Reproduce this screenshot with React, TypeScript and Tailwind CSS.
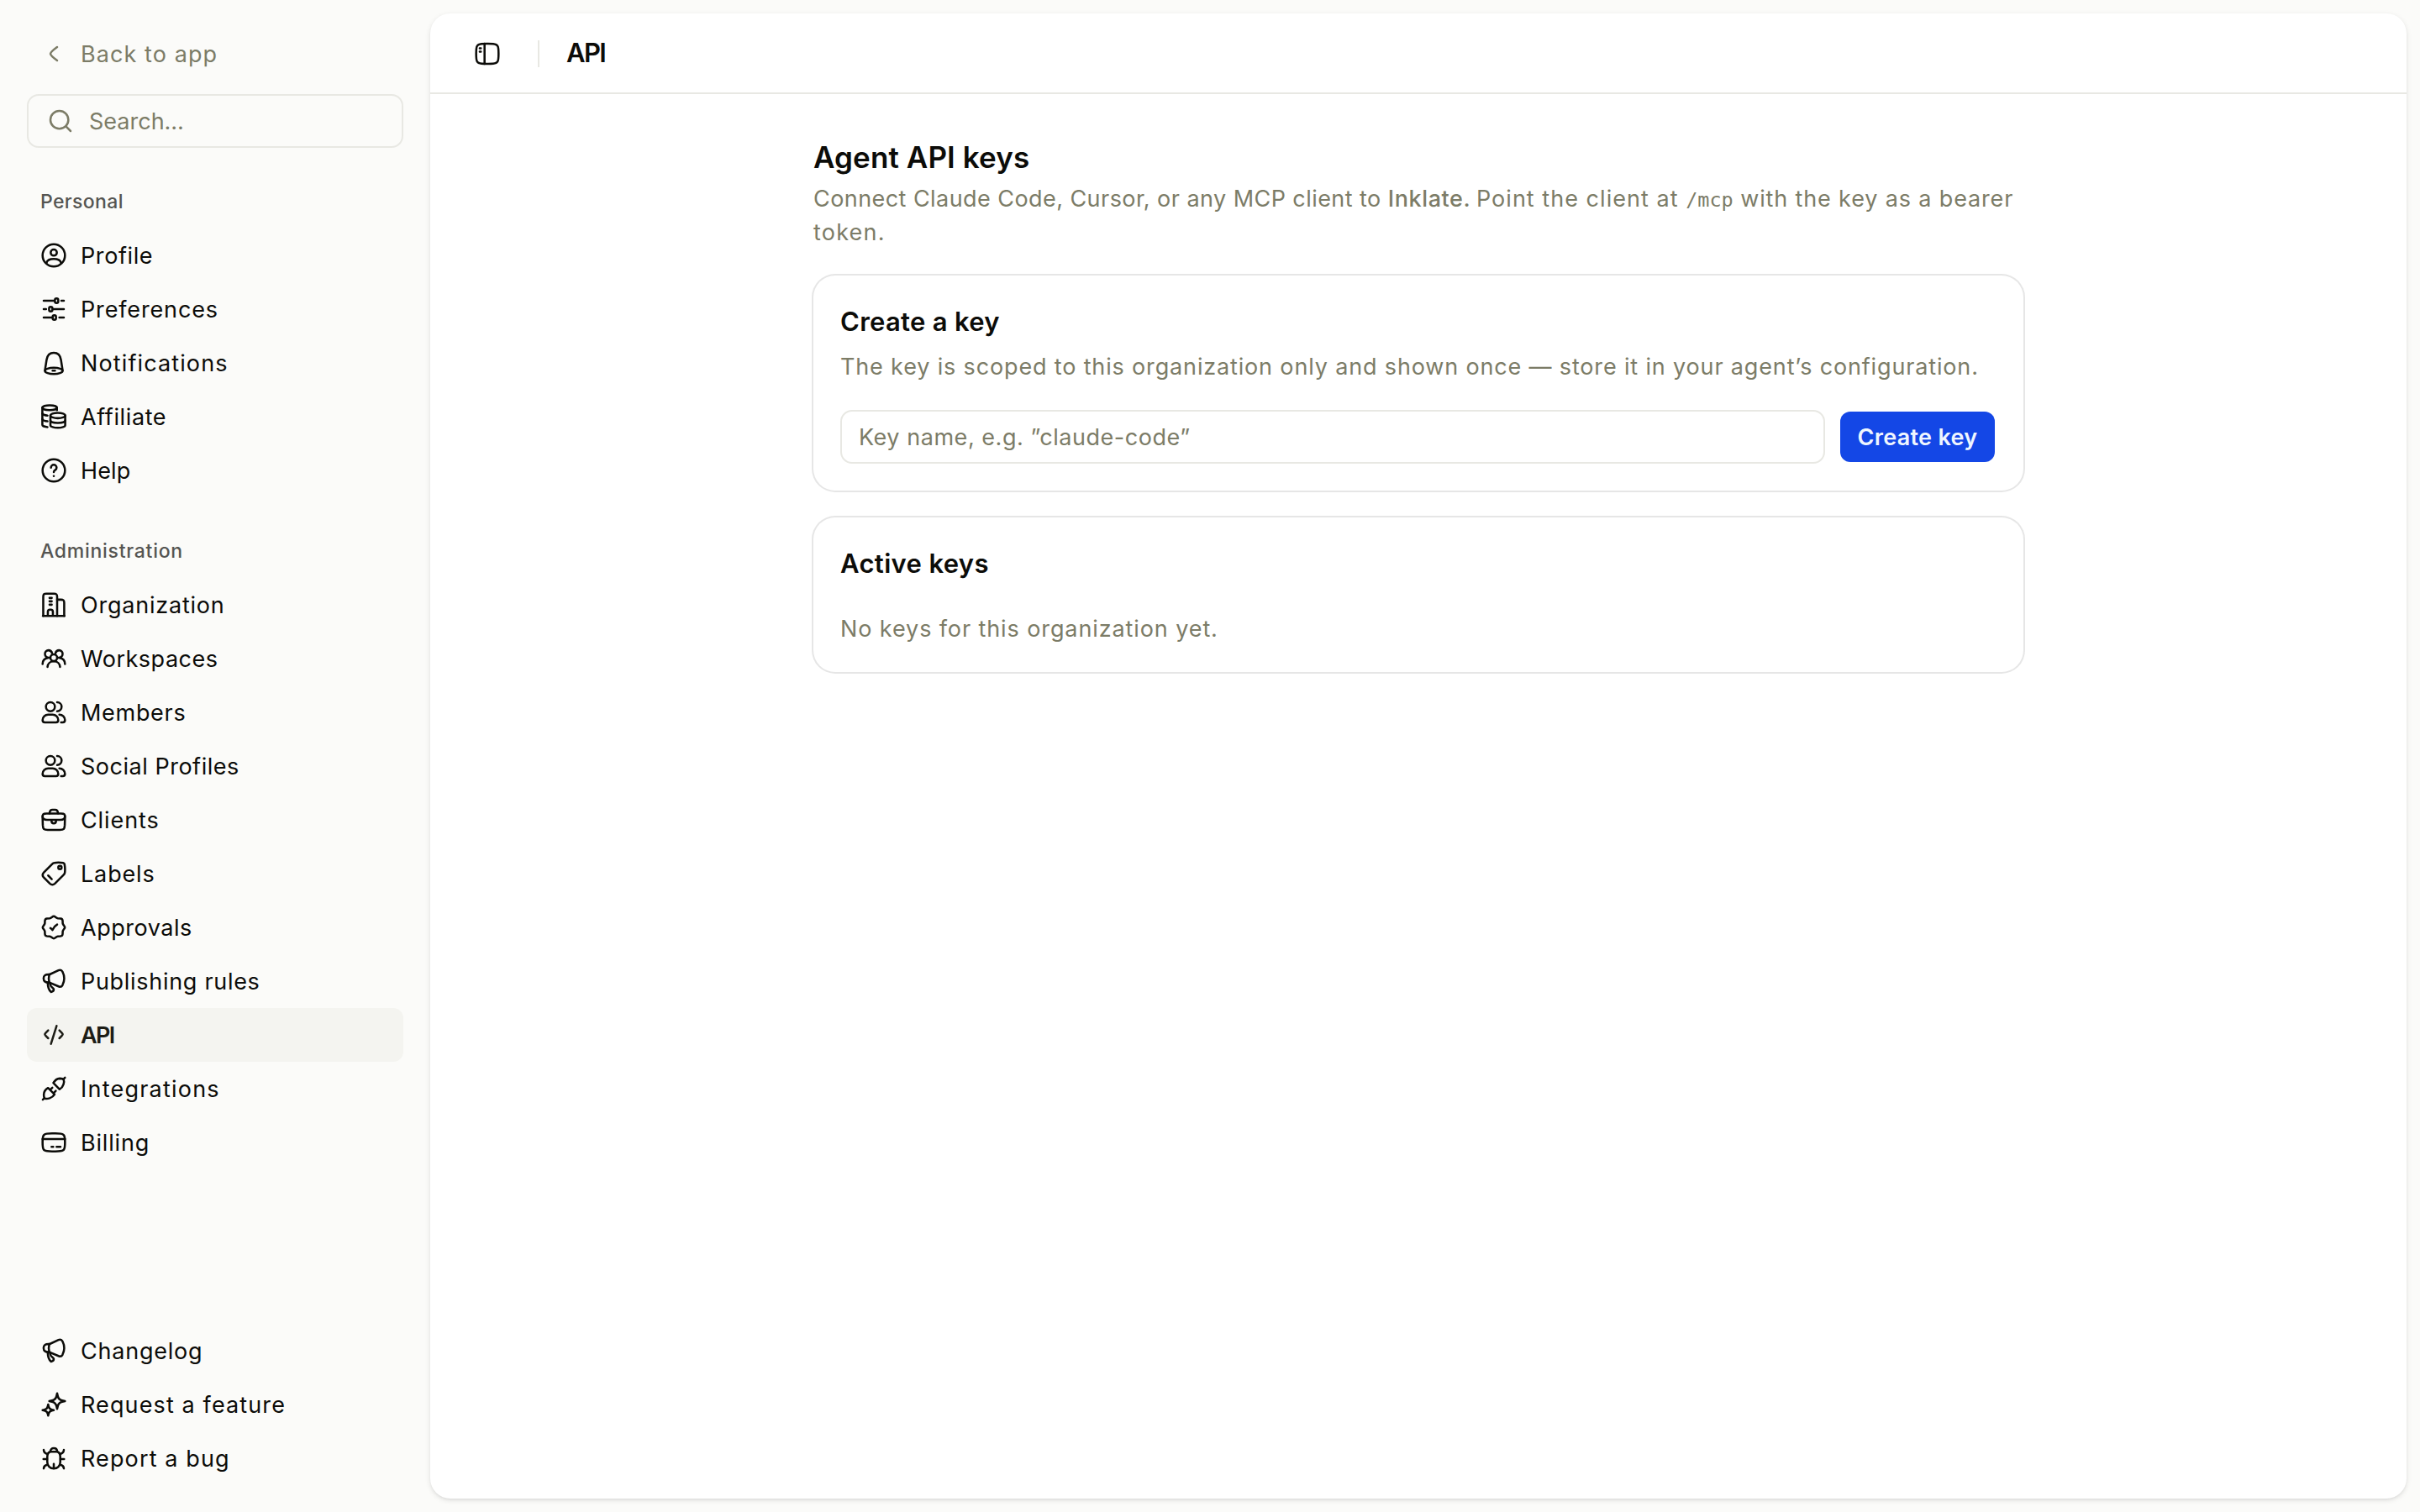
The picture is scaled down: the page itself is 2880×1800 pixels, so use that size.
import type { ReactNode } from "react"

const icons: Record<string, ReactNode> = {
  back: <path d="M15 6C15 6 9 10.42 9 12C9 13.58 15 18 15 18" />,
  search: (
    <>
      <path d="M17 17L21 21" />
      <circle cx="11" cy="11" r="8" />
    </>
  ),
  user: (
    <>
      <circle cx="12" cy="12" r="10" />
      <circle cx="12" cy="9.5" r="2.75" />
      <path d="M5.5 18.6C6.3 15.8 9.2 15.2 12 15.2C14.8 15.2 17.7 15.8 18.5 18.6" />
    </>
  ),
  sliders: (
    <>
      <path d="M3 4.5H12.6M18.8 4.5H21" />
      <rect x="13" y="2.4" width="3" height="4.2" rx="1.5" />
      <path d="M3 12H5.1M11 12H21" />
      <rect x="7.8" y="9.9" width="3" height="4.2" rx="1.5" />
      <path d="M3 19.5H10.8M17 19.5H21" />
      <rect x="11" y="17.4" width="3" height="4.2" rx="1.5" />
    </>
  ),
  bell: (
    <>
      <path d="M4.1 18.8L5.6 9.2C6.2 5.3 8.7 3 12 3C15.3 3 17.8 5.3 18.4 9.2L19.9 18.8" />
      <ellipse cx="12" cy="19.1" rx="7.9" ry="2.8" />
      <path d="M11 19H13" />
    </>
  ),
  coins: (
    <>
      <ellipse cx="8.3" cy="4" rx="6.5" ry="2.2" />
      <path d="M1.8 4V19.3C1.8 20.2 4 21.1 6.4 21.3" />
      <path d="M1.8 9.2C2.4 10.2 4.1 10.8 6.4 11" />
      <path d="M1.8 14.4C2.4 15.4 4.1 16 6.4 16.2" />
      <path d="M14.8 4V6.2" />
      <ellipse cx="15.6" cy="11" rx="6.6" ry="2.4" />
      <path d="M9 11V19.6C9 20.9 11.9 22 15.6 22C19.3 22 22.2 20.9 22.2 19.6V11" />
      <path d="M9 15.3C9 16.6 11.9 17.6 15.6 17.6C19.3 17.6 22.2 16.6 22.2 15.3" />
    </>
  ),
  help: (
    <>
      <circle cx="12" cy="12" r="10" />
      <path d="M9.5 9.5C9.5 8.12 10.62 7 12 7C13.38 7 14.5 8.12 14.5 9.5C14.5 10.36 14.07 11.11 13.41 11.56C12.73 12.03 12 12.67 12 13.5" />
      <path d="M12 17H12.01" />
    </>
  ),
  building: (
    <>
      <path d="M2.6 22V4.8C2.6 2.5 3.2 2 5.4 2H12.2C14.4 2 15 2.5 15 4.8V22" />
      <path d="M15 7.4H18.4C20.7 7.4 21.3 7.9 21.3 10.2V22" />
      <path d="M2.4 22H21.5" />
      <path d="M6.7 21.5V18.2C6.7 16.8 7.2 16.3 8.6 16.3H9.3C10.7 16.3 11.2 16.8 11.2 18.2V21.5" />
      <path d="M8.2 5.9H10.2M8.2 8.9H10.2M8.2 11.9H10.2" />
    </>
  ),
  group: (
    <>
      <circle cx="12" cy="11.2" r="3" />
      <path d="M6.4 19.4C6.6 16.5 8.9 14.4 12 14.4C15.1 14.4 17.4 16.5 17.6 19.4" />
      <path d="M8.5 11.2C6 11.7 4.1 10 4.1 7.8C4.1 6 5.5 4.6 7.3 4.6C8.8 4.6 10.1 5.6 10.5 7.3" />
      <path d="M15.5 11.2C18 11.7 19.9 10 19.9 7.8C19.9 6 18.5 4.6 16.7 4.6C15.2 4.6 13.9 5.6 13.5 7.3" />
      <path d="M2 16.8C2 14.2 3.6 12 6.6 11.4M22 16.8C22 14.2 20.4 12 17.4 11.4" />
    </>
  ),
  users: (
    <>
      <circle cx="9" cy="7" r="4" />
      <path d="M15 11C17.21 11 19 9.21 19 7C19 4.79 17.21 3 15 3" />
      <path d="M11 14H7C4.24 14 2 16.24 2 19C2 20.1 2.9 21 4 21H14C15.1 21 16 20.1 16 19C16 16.24 13.76 14 11 14Z" />
      <path d="M17 14C19.76 14 22 16.24 22 19C22 20.1 21.1 21 20 21H18.5" />
    </>
  ),
  briefcase: (
    <>
      <path d="M2 9.8C2 6.9 2.4 6.4 5.4 6.4H18.6C21.6 6.4 22 6.9 22 9.8L21.8 16.6C21.6 20.3 21 21 17.4 21H6.6C3 21 2.4 20.3 2.2 16.6Z" />
      <path d="M8.2 6.2C8.4 3.9 9.2 3 10.8 3H13.2C14.8 3 15.6 3.9 15.8 6.2" />
      <path d="M2 8.6C2 11 3.2 12 6 12H18C20.8 12 22 11 22 8.6" />
      <path d="M10 12.4V13.2A2 2 0 0 0 14 13.2V12.4" />
    </>
  ),
  tag: (
    <>
      <circle cx="17.5" cy="6.5" r="1.5" />
      <path d="M12.5 2.4C14.2 2 18.2 2 20.4 2.5C21.2 2.7 21.5 3 21.6 3.8C22 5.8 22.1 9 21.9 10.9C21.8 12 21.3 12.6 20.5 13.4L13 20.9C11.5 22.3 10 22.3 8.5 20.9L3.1 15.5C1.7 14 1.7 12.5 3.1 11L10.6 3.4C11.2 2.8 11.8 2.5 12.5 2.4Z" />
      <path d="M7 13.7L10.2 16.9" />
    </>
  ),
  badge: (
    <>
      <path d="M12 2.1C13.2 2.1 14.2 3.8 15.6 4L18 4.1C19.2 4.2 19.8 4.8 19.9 6L20 8.4C20.2 9.8 21.9 10.8 21.9 12C21.9 13.2 20.2 14.2 20 15.6L19.9 18C19.8 19.2 19.2 19.8 18 19.9L15.6 20C14.2 20.2 13.2 21.9 12 21.9C10.8 21.9 9.8 20.2 8.4 20L6 19.9C4.8 19.8 4.2 19.2 4.1 18L4 15.6C3.8 14.2 2.1 13.2 2.1 12C2.1 10.8 3.8 9.8 4 8.4L4.1 6C4.2 4.8 4.8 4.2 6 4.1L8.4 4C9.8 3.8 10.8 2.1 12 2.1Z" />
      <path d="M9 12.7C9.7 13 10.3 13.6 10.8 14.4C11.6 12.4 13.2 10.5 15 9.5" />
    </>
  ),
  megaphone: (
    <>
      <path d="M8 6.2L16.2 2.4C18 1.6 18.9 1.9 19.8 3.6C21.7 7.4 21.7 11.8 19.8 15.6C18.9 17.3 18 17.4 16.2 16.7L8 13.2" />
      <path d="M8 6C4.6 5.8 2.9 7 2.9 9.6C2.9 12.2 4.6 13.4 8 13.2C7.4 11 7.4 8.2 8 6Z" />
      <path d="M6.6 13.6C6.7 17.2 7.8 20.3 9.6 21.7C11 21.5 12 20.7 12 19.4C11.9 18 10.2 17.8 9.5 16.5C9 15.5 8.7 14.6 8.6 13.6" />
    </>
  ),
  code: (
    <>
      <path d="M17 8L18.84 9.85C19.61 10.63 20 11.02 20 11.5C20 11.98 19.61 12.37 18.84 13.15L17 15" />
      <path d="M7 8L5.16 9.85C4.39 10.63 4 11.02 4 11.5C4 11.98 4.39 12.37 5.16 13.15L7 15" />
      <path d="M14.5 4L9.5 20" />
    </>
  ),
  plug: (
    <>
      <path d="M11.6 6.9C13 4.6 15 3 17.4 2.9C19 2.9 20.3 3.3 20.8 3.9C21.3 5 21.1 6.8 20.6 8.3C20 10.2 18.8 11.6 17.2 12.6Z" />
      <path d="M20.6 3.6L22 2.2" />
      <path d="M6.9 11.4C4.5 12.8 3.2 14.8 3.1 17.2C3 18.8 3.3 20.1 3.9 20.7C5 21.2 6.8 21 8.3 20.5C10.2 19.8 11.7 18.7 12.7 17.1Z" />
      <path d="M3.5 20.5L2.2 21.8" />
      <path d="M9.2 12.6L10.7 11.1M12.2 15.6L13.8 14" />
    </>
  ),
  card: (
    <>
      <path d="M2 12C2 8.46 2 6.69 3.05 5.51C3.22 5.32 3.41 5.15 3.61 4.99C4.86 4 6.74 4 10.5 4H13.5C17.26 4 19.14 4 20.39 4.99C20.59 5.15 20.78 5.32 20.95 5.51C22 6.69 22 8.46 22 12C22 15.54 22 17.31 20.95 18.49C20.78 18.68 20.59 18.85 20.39 19.01C19.14 20 17.26 20 13.5 20H10.5C6.74 20 4.86 20 3.61 19.01C3.41 18.85 3.22 18.68 3.05 18.49C2 17.31 2 15.54 2 12Z" />
      <path d="M10 16H11.5M14.5 16H18M2 9H22" />
    </>
  ),
  sparkles: (
    <>
      <path d="M15 2L15.54 4.39C16 6.42 17.58 8 19.61 8.46L22 9L19.61 9.54C17.58 10 16 11.58 15.54 13.61L15 16L14.46 13.61C14 11.58 12.42 10 10.39 9.54L8 9L10.39 8.46C12.42 8 14 6.42 14.46 4.39L15 2Z" />
      <path d="M7 12L7.38 13.71C7.71 15.16 8.84 16.29 10.29 16.62L12 17L10.29 17.38C8.84 17.71 7.71 18.84 7.38 20.29L7 22L6.62 20.29C6.29 18.84 5.16 17.71 3.71 17.38L2 17L3.71 16.62C5.16 16.29 6.29 15.16 6.62 13.71L7 12Z" />
    </>
  ),
  bug: (
    <>
      <path d="M8.8 6.2H15.2C17 6.8 17.8 8.6 17.8 11V15.4C17.8 18.8 15.4 21.2 12 21.2C8.6 21.2 6.2 18.8 6.2 15.4V11C6.2 8.6 7 6.8 8.8 6.2Z" />
      <path d="M9 6C9 4.2 10.2 3 12 3C13.8 3 15 4.2 15 6" />
      <path d="M12 17V21" />
      <path d="M3 4.6C3.2 6.6 4.4 7.9 6.6 8.3M21 4.6C20.8 6.6 19.6 7.9 17.4 8.3M2.8 12.7H6M21.2 12.7H18M3 21.1C3.2 19.4 4.2 18.3 6.2 17.9M21 21.1C20.8 19.4 19.8 18.3 17.8 17.9" />
    </>
  ),
  panel: (
    <>
      <path d="M2 12C2 8.3 2 6.5 2.8 5.2C3.2 4.5 3.8 4 4.4 3.8C5.8 3 7.7 3 11.4 3H12.6C16.3 3 18.2 3 19.6 3.8C20.2 4 20.8 4.5 21.2 5.2C22 6.5 22 8.3 22 12C22 15.7 22 17.5 21.2 18.8C20.8 19.5 20.2 20 19.6 20.2C18.2 21 16.3 21 12.6 21H11.4C7.7 21 5.8 21 4.4 20.2C3.8 20 3.2 19.5 2.8 18.8C2 17.5 2 15.7 2 12Z" />
      <path d="M9.5 3V21M5.2 7.1H6.2M5.2 10.1H6.2" />
    </>
  ),
}

function Icon({ name }: { name: string }) {
  return (
    <svg
      xmlns="http://www.w3.org/2000/svg"
      viewBox="0 0 24 24"
      fill="none"
      stroke="currentColor"
      strokeWidth="1.9"
      strokeLinecap="round"
      strokeLinejoin="round"
      className="size-8 shrink-0"
    >
      {icons[name]}
    </svg>
  )
}

type Item = { name: string; icon: string; tracking: string; active?: boolean }

const personal: Item[] = [
  { name: "Profile", icon: "user", tracking: "tracking-[0.6px]" },
  { name: "Preferences", icon: "sliders", tracking: "tracking-[0.86px]" },
  { name: "Notifications", icon: "bell", tracking: "tracking-[1.12px]" },
  { name: "Affiliate", icon: "coins", tracking: "tracking-[0.62px]" },
  { name: "Help", icon: "help", tracking: "tracking-[0.15px]" },
]

const administration: Item[] = [
  { name: "Organization", icon: "building", tracking: "tracking-[0.78px]" },
  { name: "Workspaces", icon: "group", tracking: "tracking-[0.5px]" },
  { name: "Members", icon: "users", tracking: "tracking-[0.7px]" },
  { name: "Social Profiles", icon: "users", tracking: "tracking-[0.52px]" },
  { name: "Clients", icon: "briefcase", tracking: "tracking-[0.9px]" },
  { name: "Labels", icon: "tag", tracking: "tracking-[0.85px]" },
  { name: "Approvals", icon: "badge", tracking: "tracking-[0.52px]" },
  { name: "Publishing rules", icon: "megaphone", tracking: "tracking-[0.7px]" },
  { name: "API", icon: "code", tracking: "tracking-[-1.7px]", active: true },
  { name: "Integrations", icon: "plug", tracking: "tracking-[1.22px]" },
  { name: "Billing", icon: "card", tracking: "tracking-[0.82px]" },
]

const footer: Item[] = [
  { name: "Changelog", icon: "megaphone", tracking: "tracking-[0.77px]" },
  { name: "Request a feature", icon: "sparkles", tracking: "tracking-[1.12px]" },
  { name: "Report a bug", icon: "bug", tracking: "tracking-[1.12px]" },
]

function NavList({ items }: { items: Item[] }) {
  return (
    <ul>
      {items.map((item) => (
        <li key={item.name}>
          <a
            className={`flex h-16 items-center gap-4 rounded-[12px] px-4 ${
              item.active ? "bg-[#f4f4f0] font-semibold text-[#1d1d16]" : ""
            }`}
          >
            <Icon name={item.icon} />
            <span className={`pt-0.5 ${item.tracking}`}>{item.name}</span>
          </a>
        </li>
      ))}
    </ul>
  )
}

export default function App() {
  return (
    <div className="flex h-[1800px] w-[2880px] overflow-hidden bg-[#fbfbf9] font-['Inter',sans-serif] text-[27px] leading-10 text-[#0c0c09]">
      {/* Sidebar */}
      <aside className="flex w-[512px] shrink-0 flex-col p-8">
        <a className="flex h-16 items-center gap-4 px-4 text-[#7c7c67]">
          <Icon name="back" />
          <span className="pt-0.5 tracking-[1.08px]">Back to app</span>
        </a>
        <div className="mt-4 flex h-16 items-center gap-[18px] rounded-[14px] border-2 border-[#e8e8e3] px-[22px] text-[#7c7c67]">
          <Icon name="search" />
          <span className="pt-0.5">Search…</span>
        </div>
        <h2 className="mt-8 flex h-16 items-center px-4 text-[23px] font-medium tracking-[0.36px] text-[#555552]">
          Personal
        </h2>
        <NavList items={personal} />
        <h2 className="mt-8 flex h-16 items-center px-4 text-[23px] font-medium tracking-[0.73px] text-[#555552]">
          Administration
        </h2>
        <NavList items={administration} />
        <div className="mt-auto">
          <NavList items={footer} />
        </div>
      </aside>

      {/* Content panel */}
      <main className="mt-4 mr-4 mb-4 flex-1 rounded-[24px] bg-white shadow-[0_2px_6px_rgba(0,0,0,0.1),0_2px_4px_-2px_rgba(0,0,0,0.1)]">
        <header className="flex h-24 items-center border-b-2 border-[#e8e8e3] pt-0.5 pl-[52px]">
          <Icon name="panel" />
          <div className="ml-11 h-8 w-0.5 bg-[#e8e8e3]"></div>
          <h1 className="ml-8 pb-0.5 text-[31px] font-semibold tracking-[-1.6px]">API</h1>
        </header>

        <div className="mx-auto w-[1440px] pt-12">
          <h2 className="text-[35px] leading-[54px] font-semibold tracking-[0.12px]">Agent API keys</h2>
          <p className="mt-[3px] h-20 text-[#7c7c67]">
            <span className="tracking-[0.44px]">Connect Claude Code, Cursor, or any MCP client to </span>
            <span className="font-medium tracking-[0.6px]">Inklate.</span>
            <span className="-ml-0.5 tracking-[1.03px]"> Point the client at </span>
            <code className="font-['DejaVu_Sans_Mono',monospace] text-[23.5px] leading-none">/mcp</code>
            <span className="tracking-[0.86px]"> with the key as a bearer </span>
            <span className="tracking-[1.2px]">token.</span>
          </p>

          <section className="mt-[31px] rounded-[26px] px-8 pt-[33px] pb-8 ring-2 ring-[#e6e6e6]">
            <h3 className="text-[31px] leading-[44px] font-semibold tracking-[0.3px]">Create a key</h3>
            <p className="mt-3 tracking-[0.845px] whitespace-nowrap text-[#7c7c67]">
              The key is scoped to this organization only and shown once — store it in your agent’s configuration.
            </p>
            <div className="mt-[31px] flex items-center">
              <div className="flex h-16 flex-1 items-center rounded-[14px] border-2 border-[#e8e8e3] px-5 pt-0.5 tracking-[0.54px] text-[#7c7c67]">
                Key name, e.g. ”claude-code”
              </div>
              <button className="mr-0.5 ml-[18px] h-[60px] w-[184px] rounded-[12px] bg-[#1447e6] pt-0.5 font-semibold tracking-[0.3px] text-[#eff6ff]">
                Create key
              </button>
            </div>
          </section>

          <section className="mt-8 rounded-[26px] px-8 pt-[33px] pb-[31px] ring-2 ring-[#e6e6e6]">
            <h3 className="text-[31px] leading-[44px] font-semibold tracking-[0.35px]">Active keys</h3>
            <p className="mt-9 tracking-[0.9px] text-[#7c7c67]">No keys for this organization yet.</p>
          </section>
        </div>
      </main>
    </div>
  )
}
